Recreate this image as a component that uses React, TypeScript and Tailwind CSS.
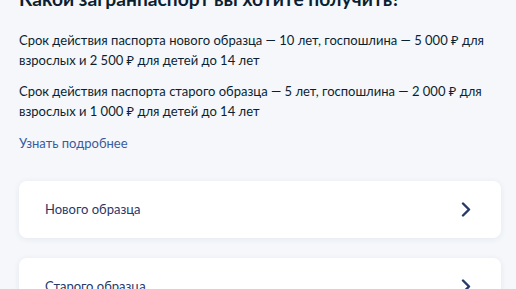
const options = ['Нового образца', 'Старого образца'];

function Chevron() {
  return (
    <svg width="10" height="15" viewBox="0 0 10 15" fill="none" className="text-[#27386b]">
      <path d="M2 1.5l6 6-6 6" stroke="currentColor" strokeWidth="2.4" strokeLinecap="round" strokeLinejoin="round" />
    </svg>
  );
}

export default function App() {
  return (
    <div className="h-[289px] w-[516px] overflow-hidden bg-[#f5f7fa] font-['Lato','Noto_Sans',sans-serif] text-[#0b1f33]">
      <div className="-mt-[15px] pl-[19px] pr-[15px]">
        <h1 className="text-[19.2px] font-bold leading-[28px]">Какой загранпаспорт вы хотите получить?</h1>

        <p className="mt-[17px] text-[13px] leading-[20px]">
          Срок действия паспорта нового образца — 10 лет, госпошлина — 5 000 ₽ для взрослых и 2 500 ₽ для детей до 14 лет
        </p>
        <p className="mt-[11px] text-[13px] leading-[20px]">
          Срок действия паспорта старого образца — 5 лет, госпошлина — 2 000 ₽ для взрослых и 1 000 ₽ для детей до 14 лет
        </p>

        <a href="#" className="mt-[12px] block text-[13px] leading-[20px] text-[#3a5ba0]">
          Узнать подробнее
        </a>

        {/* Options */}
        <div className="mt-[28px] flex flex-col gap-[20px]">
          {options.map((label) => (
            <button
              key={label}
              className="flex h-[57px] w-full items-center justify-between rounded-[8px] bg-white pl-[26px] pr-[30px] text-left shadow-[0_1px_6px_rgba(14,50,120,0.08)]"
            >
              <span className="text-[13px] text-[#27386b]">{label}</span>
              <Chevron />
            </button>
          ))}
        </div>
      </div>
    </div>
  );
}
